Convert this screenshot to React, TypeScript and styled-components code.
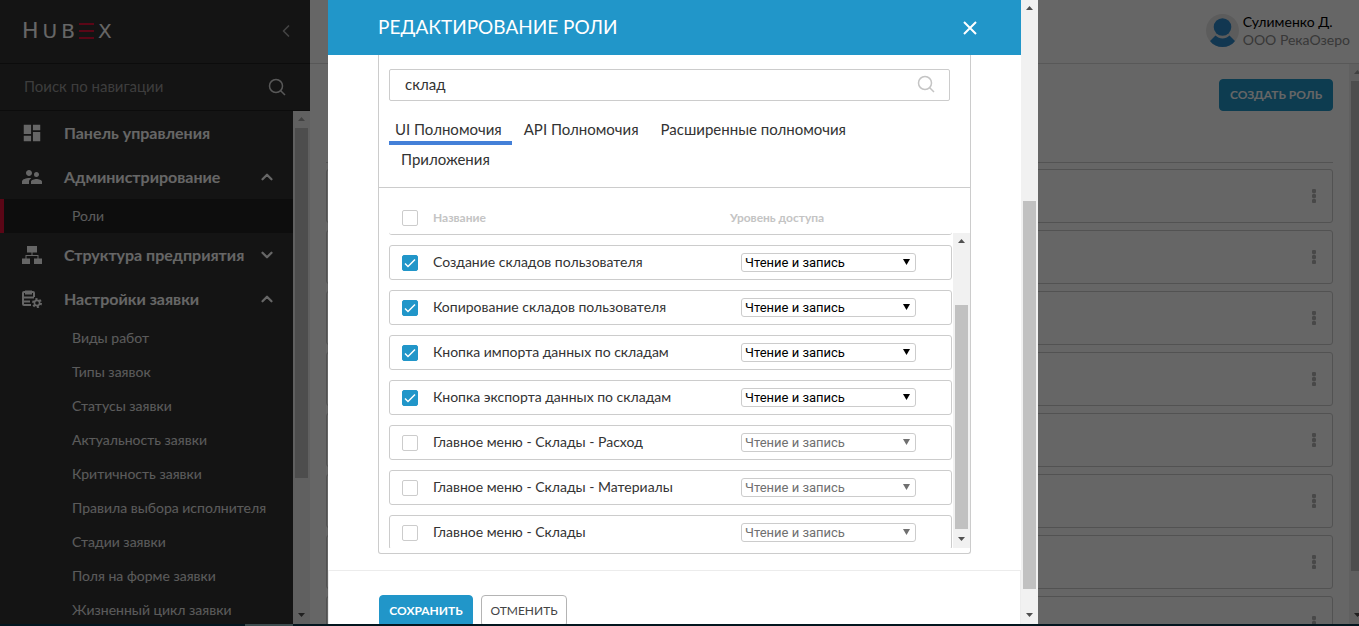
import React, { useState } from 'react';
import styled, { createGlobalStyle, css } from 'styled-components';
import { ChevronDown, ChevronLeft, ChevronUp } from 'lucide-react';
import { MdDashboard, MdSupervisorAccount } from 'react-icons/md';

const blue = '#2196c9';
const line = '#cccccc';

const GlobalStyle = createGlobalStyle`
  * { box-sizing: border-box; }
  body { margin: 0; font-family: Lato, "Open Sans", sans-serif; font-size: 15px; color: #333; }
  button, input, select { font-family: inherit; margin: 0; }
  button { cursor: pointer; }
  svg { flex: none; }
  ul { list-style: none; margin: 0; padding: 0; }
`;

/* ---------- shell ---------- */

const Shell = styled.div`
  display: flex;
  flex-direction: column;
  height: 100vh;
  overflow: hidden;
`;

const Workspace = styled.div`
  position: relative;
  display: flex;
  flex: 1;
  min-height: 0;
  width: calc(100% + 7px);
  background: #fff;
  overflow: hidden;
`;

const TaskStrip = styled.div`
  display: flex;
  height: 2px;
  padding-left: 245px;
  background: #03161f;
`;

const TaskActive = styled.div`
  width: 48px;
  background: #3b4b4e;
`;

/* ---------- scrollbar ---------- */

const Bar = styled.div`
  display: flex;
  flex-direction: column;
  flex: none;
  width: 17px;
  background: #f1f1f1;
`;

const BarArrow = styled.svg`
  display: block;
  flex: none;
  width: 17px;
  height: 17px;
`;

const BarSpace = styled.div<{ $part: number }>`
  flex: ${p => p.$part} 1 0;
`;

const BarThumb = styled(BarSpace)`
  margin: 0 2px;
  background: #c1c1c1;
`;

function Scrollbar({ before, thumb, after, dimUp }: { before: number; thumb: number; after: number; dimUp?: boolean }) {
  return (
    <Bar aria-hidden="true">
      <BarArrow viewBox="0 0 17 17"><path d="M5 10h7L8.500 6z" fill={dimUp ? '#a3a3a3' : '#505050'} /></BarArrow>
      <BarSpace $part={before} />
      <BarThumb $part={thumb} />
      <BarSpace $part={after} />
      <BarArrow viewBox="0 0 17 17"><path d="M5 6h7L8.500 10z" fill="#505050" /></BarArrow>
    </Bar>
  );
}

/* ---------- sidebar ---------- */

const Sidebar = styled.aside`
  display: flex;
  flex-direction: column;
  flex: none;
  width: 310px;
  background: #323232;
  color: #fff;
`;

const SideHead = styled.div`
  display: flex;
  align-items: center;
  justify-content: space-between;
  flex: none;
  height: 64px;
  padding: 0 14px 2px 22px;
  border-bottom: 1px solid #1e1e1e;
`;

const Logo = styled.div`
  display: flex;
  align-items: baseline;
  gap: 4px;
  font-family: "DejaVu Sans", sans-serif;
  font-size: 20px;
  line-height: 24px;
`;

const LogoCap = styled.span`
  font-size: 22px;
`;

const LogoBars = styled.span`
  display: flex;
  flex-direction: column;
  align-self: center;
  justify-content: space-between;
  width: 15px;
  height: 16px;

  i { height: 2px; background: #e01138; }
`;

const IconButton = styled.button<{ $color: string }>`
  display: flex;
  padding: 0;
  border: 0;
  background: none;
  color: ${p => p.$color};
`;

const SideSearch = styled.label`
  display: flex;
  align-items: center;
  justify-content: space-between;
  flex: none;
  height: 47px;
  padding: 0 24px;
  border-bottom: 1px solid #1e1e1e;
  color: #ddd;

  input {
    flex: 1;
    min-width: 0;
    padding: 0 0 2px;
    border: 0;
    outline: 0;
    background: none;
    color: #fff;
    font-size: 15px;
  }
  input::placeholder { color: #999; opacity: 1; }
`;

const SideBody = styled.div`
  display: flex;
  flex: 1;
  min-height: 0;
`;

const Nav = styled.nav`
  flex: 1;
  min-width: 0;
  overflow: hidden;
`;

const NavGroup = styled.button`
  display: flex;
  align-items: center;
  gap: 20px;
  width: 100%;
  height: 44px;
  padding: 0 17px 0 20px;
  border: 0;
  background: none;
  color: #fff;
  font-size: 16px;
  font-weight: 700;
  text-align: left;
`;

const NavIcon = styled.span`
  display: flex;
  justify-content: center;
  flex: none;
  width: 24px;
`;

const NavText = styled.span`
  flex: 1;
  min-width: 0;
  padding-bottom: 2px;
  white-space: nowrap;
`;

const NavLink = styled.a<{ $active?: boolean }>`
  display: block;
  padding-left: 72px;
  color: #e4e4e4;
  font-size: 14px;
  line-height: 34px;
  text-decoration: none;
  white-space: nowrap;
  ${p => p.$active && css`
    padding-left: 68px;
    border-left: 4px solid #e01138;
    background: #212121;
  `}
`;

/* ---------- page behind the dialog ---------- */

const Main = styled.main`
  display: flex;
  flex-direction: column;
  flex: 1;
  min-width: 0;
`;

const TopBar = styled.header`
  display: flex;
  align-items: center;
  justify-content: flex-end;
  flex: none;
  height: 64px;
  padding: 0 16px 2px;
  border-bottom: 1px solid #dcdcdc;
`;

const User = styled.div`
  display: flex;
  align-items: center;
  gap: 4px;
  font-size: 14px;
  line-height: 18px;
`;

const UserName = styled.div`color: #000;`;
const UserOrg = styled.div`color: #8c8c8c;`;

const PageBody = styled.div`
  display: flex;
  flex: 1;
  min-height: 0;
`;

const PageContent = styled.div`
  flex: 1;
  min-width: 0;
  padding: 15px 16px 0;
  overflow: hidden;
`;

const PageHead = styled.div`
  display: flex;
  justify-content: flex-end;
  height: 84px;
  margin-bottom: 6px;
  border-bottom: 1px solid #d0d0d0;
`;

const RoleCards = styled.ul`
  display: flex;
  flex-direction: column;
  gap: 7px;
`;

const RoleCard = styled.li`
  display: flex;
  align-items: center;
  justify-content: flex-end;
  flex: none;
  height: 54px;
  padding-right: 16px;
  border: 1px solid ${line};
  border-radius: 3px;
`;

/* ---------- dialog ---------- */

const Overlay = styled.div`
  position: absolute;
  inset: 0;
  display: flex;
  justify-content: center;
  background: rgba(0, 0, 0, 0.6);
`;

const Dialog = styled.section`
  display: flex;
  width: 100%;
  max-width: 710px;
  overflow: hidden;
  background: #fff;
`;

const DialogMain = styled.form`
  display: flex;
  flex-direction: column;
  flex: 1;
  min-width: 0;
`;

const DialogHead = styled.header`
  display: flex;
  align-items: center;
  justify-content: space-between;
  flex: none;
  height: 55px;
  padding: 0 42px 0 50px;
  background: ${blue};
  color: #fff;
`;

const DialogTitle = styled.h2`
  margin: 0;
  padding-bottom: 2px;
  font-size: 19px;
  font-weight: 400;
  line-height: 24px;
`;

const Panel = styled.div`
  flex: none;
  margin: 0 50px 16px;
  border: 1px solid ${line};
  border-top: 0;
  border-radius: 0 0 3px 3px;
`;

const PanelTop = styled.div`
  padding: 14px 20px 12px 10px;
  border-bottom: 1px solid ${line};
`;

const SearchField = styled.label`
  display: flex;
  align-items: center;
  height: 32px;
  margin-bottom: 14px;
  padding: 0 14px 2px 15px;
  border: 1px solid ${line};
  border-radius: 2px;
  color: #c4c4c4;

  input {
    flex: 1;
    min-width: 0;
    padding: 0;
    border: 0;
    outline: 0;
    background: none;
    color: #333;
    font-size: 15px;
  }
`;

const Tabs = styled.div`
  display: flex;
  flex-wrap: wrap;
`;

const Tab = styled.button<{ $active?: boolean }>`
  height: 30px;
  padding: 0 10px 2px 12px;
  border: 0;
  background: none;
  color: #333;
  font-size: 15px;
  line-height: 28px;
  ${p => p.$active && css`
    padding-left: 6px;
    box-shadow: inset 0 -4px 0 #4480d8;
  `}
`;

const TableArea = styled.div`
  display: flex;
  align-items: flex-end;
  padding: 0 0 5px 10px;
`;

const ScrollHolder = styled.div`
  display: flex;
  height: 315px;
  margin-left: 1px;
`;

const Table = styled.table`
  display: block;
  flex: 1;
  min-width: 0;
`;

const HeadSection = styled.thead`
  display: block;
`;

const HeadRow = styled.tr`
  display: grid;
  grid-template-columns: 44px 297px 1fr;
  align-items: center;
  height: 47px;
  padding: 14px 0 0;
  border-bottom: 1px solid ${line};
  border-radius: 0 0 3px 3px;
  color: #c4c4c4;
  font-size: 12px;
`;

const HeadCell = styled.th`
  padding: 0 0 1px;
  font-weight: 700;
  text-align: left;

  &:first-child { padding: 0 0 0 13px; }
`;

const Rows = styled.tbody`
  display: flex;
  flex-direction: column;
  gap: 10px;
  height: 313px;
  padding-top: 10px;
  overflow: hidden;
`;

const Row = styled.tr`
  display: grid;
  grid-template-columns: 43px 308px 1fr;
  align-items: center;
  flex: none;
  height: 35px;
  border: 1px solid ${line};
  border-radius: 3px;
`;

const Cell = styled.td<{ $kind: 'check' | 'name' | 'level' }>`
  padding: 0;
  font-size: 14px;
  ${p => p.$kind === 'check' && css`padding-left: 12px;`}
  ${p => p.$kind === 'name' && css`padding-bottom: 2px;`}
`;

const CheckWrap = styled.span`
  display: grid;
  width: 16px;
  height: 16px;

  > * { grid-area: 1 / 1; }
  svg { pointer-events: none; }
`;

const CheckInput = styled.input`
  appearance: none;
  width: 16px;
  height: 16px;
  border: 1px solid ${line};
  border-radius: 2px;
  background: #fff;

  &:checked { border-color: ${blue}; background: ${blue}; }
`;

const SelectWrap = styled.span`
  display: grid;
  align-items: center;
  width: 175px;

  > * { grid-area: 1 / 1; }
  svg { justify-self: end; margin: 0 6px 1px 0; pointer-events: none; }
`;

const Select = styled.select`
  appearance: none;
  width: 100%;
  height: 19px;
  padding: 0 20px 0 3px;
  border: 1px solid ${line};
  border-radius: 3px;
  background: #fff;
  color: #000;
  font-family: Roboto, sans-serif;
  font-size: 13px;
  line-height: 17px;

  &:disabled { color: #707070; opacity: 1; }
`;

const DialogFoot = styled.footer`
  display: flex;
  gap: 8px;
  flex: 1;
  align-items: flex-start;
  padding: 24px 50px;
  border: 1px solid #ececec;
`;

const Button = styled.button<{ $primary?: boolean; $wide?: boolean }>`
  flex: none;
  height: 32px;
  min-width: ${p => (p.$wide ? 114 : p.$primary ? 94 : 86)}px;
  padding: 0 8px 2px;
  border: 1px solid ${p => (p.$primary ? blue : '#b4b4b4')};
  border-radius: 4px;
  background: ${p => (p.$primary ? blue : '#fff')};
  color: ${p => (p.$primary ? '#fff' : '#444')};
  font-size: 12px;
  font-weight: ${p => (p.$primary ? 700 : 400)};
`;

/* ---------- drawings ---------- */

const SearchIcon = () => (
  <svg width="18" height="18" viewBox="0 0 18 18" fill="none" stroke="currentColor" strokeWidth="1.500">
    <circle cx="8" cy="8" r="6.500" />
    <path d="M12.500 12.500 17 17" />
  </svg>
);

const StructureIcon = () => (
  <svg width="20" height="18" viewBox="0 0 20 18" fill="currentColor">
    <path d="M5 0h10v6.500H5zM9.500 6.500h1V9h6v3.500h-1V10h-11v2.500h-1V9h6zM0 12.500h8V18H0zM12 12.500h8V18h-8z" />
  </svg>
);

const RequestIcon = () => (
  <svg width="20" height="18" viewBox="0 0 20 18" fill="none" stroke="currentColor">
    <path d="M9 15H2c-.6 0-1-.4-1-1V3c0-.6.400-1 1-1h9c.6 0 1 .4 1 1v4" strokeWidth="2" />
    <path d="M4 1.500h5v2H4z" strokeWidth="2" />
    <path d="M2 7.500h10M2 11.500h6" strokeWidth="2" />
    <circle cx="15" cy="13" r="2.600" strokeWidth="1.600" />
    <circle cx="15" cy="13" r="4" strokeWidth="2" strokeDasharray="2.090 2.090" />
  </svg>
);

const Avatar = () => (
  <svg width="33" height="33" viewBox="0 0 33 33">
    <circle cx="16.500" cy="16.500" r="16.500" fill="#e6e6e6" />
    <circle cx="16.500" cy="13" r="8.800" fill="#2f8acb" />
    <path d="M4 27l5.500-5.500c4 4 10 4 14 0L29 27c-3 4-7.500 6-12.500 6S7 31 4 27z" fill="#2f8acb" />
  </svg>
);

const Dots = () => (
  <svg width="4" height="14" viewBox="0 0 4 14" fill="#b4b4b4">
    <circle cx="2" cy="2" r="2.200" /><circle cx="2" cy="7" r="2.200" /><circle cx="2" cy="12" r="2.200" />
  </svg>
);

const CloseIcon = () => (
  <svg width="18" height="18" viewBox="0 0 18 18" stroke="currentColor" strokeWidth="2">
    <path d="M3 3l12 12M15 3 3 15" />
  </svg>
);

const Tick = () => (
  <svg width="16" height="16" viewBox="0 0 16 16" fill="none" stroke="#fff" strokeWidth="1.500">
    <path d="M3 8.500l3 3 7-7" />
  </svg>
);

/* ---------- data ---------- */

const settings = [
  'Виды работ', 'Типы заявок', 'Статусы заявки', 'Актуальность заявки', 'Критичность заявки',
  'Правила выбора исполнителя', 'Стадии заявки', 'Поля на форме заявки', 'Жизненный цикл заявки',
];

const tabs = ['UI Полномочия', 'API Полномочия', 'Расширенные полномочия', 'Приложения'];

const initialRights = [
  { name: 'Создание складов пользователя', on: true },
  { name: 'Копирование складов пользователя', on: true },
  { name: 'Кнопка импорта данных по складам', on: true },
  { name: 'Кнопка экспорта данных по складам', on: true },
  { name: 'Главное меню - Склады - Расход', on: false },
  { name: 'Главное меню - Склады - Материалы', on: false },
  { name: 'Главное меню - Склады', on: false },
];

function Checkbox({ label, checked, onChange }: { label: string; checked: boolean; onChange: (v: boolean) => void }) {
  return (
    <CheckWrap>
      <CheckInput type="checkbox" aria-label={label} checked={checked} onChange={e => onChange(e.target.checked)} />
      {checked && <Tick />}
    </CheckWrap>
  );
}

function Group({ icon, text, chevron }: { icon: React.ReactNode; text: string; chevron?: 'up' | 'down' }) {
  return (
    <NavGroup type="button">
      <NavIcon>{icon}</NavIcon>
      <NavText>{text}</NavText>
      {chevron === 'up' && <ChevronUp size={18} strokeWidth={3} />}
      {chevron === 'down' && <ChevronDown size={18} strokeWidth={3} />}
    </NavGroup>
  );
}

export default function App() {
  const [rights, setRights] = useState(initialRights);
  const [tab, setTab] = useState(0);
  const [query, setQuery] = useState('склад');

  const toggle = (index: number, on: boolean) =>
    setRights(rights.map((r, i) => (i === index ? { ...r, on } : r)));

  return (
    <Shell>
      <GlobalStyle />
      <Workspace>
        <Sidebar>
          <SideHead>
            <Logo aria-label="HubEx">
              <LogoCap>H</LogoCap><span>U</span><span>B</span>
              <LogoBars><i /><i /><i /></LogoBars>
              <span>X</span>
            </Logo>
            <IconButton type="button" $color="#a8a8a8" aria-label="Свернуть меню"><ChevronLeft size={20} /></IconButton>
          </SideHead>
          <SideSearch>
            <input type="text" placeholder="Поиск по навигации" aria-label="Поиск по навигации" />
            <SearchIcon />
          </SideSearch>
          <SideBody>
            <Nav>
              <Group icon={<MdDashboard size={22} />} text="Панель управления" />
              <Group icon={<MdSupervisorAccount size={24} />} text="Администрирование" chevron="up" />
              <NavLink href="#roles" $active>Роли</NavLink>
              <Group icon={<StructureIcon />} text="Структура предприятия" chevron="down" />
              <Group icon={<RequestIcon />} text="Настройки заявки" chevron="up" />
              {settings.map(s => <NavLink key={s} href="#settings">{s}</NavLink>)}
            </Nav>
            <Scrollbar before={0} thumb={350} after={129} dimUp />
          </SideBody>
        </Sidebar>

        <Main>
          <TopBar>
            <User>
              <Avatar />
              <div>
                <UserName>Сулименко Д.</UserName>
                <UserOrg>ООО РекаОзеро</UserOrg>
              </div>
            </User>
          </TopBar>
          <PageBody>
            <PageContent>
              <PageHead><Button type="button" $primary $wide>СОЗДАТЬ РОЛЬ</Button></PageHead>
              <RoleCards>
                {Array.from({ length: 8 }, (_, i) => <RoleCard key={i}><Dots /></RoleCard>)}
              </RoleCards>
            </PageContent>
            <Scrollbar before={0} thumb={490} after={36} dimUp />
          </PageBody>
        </Main>

        <Overlay>
          <Dialog role="dialog" aria-labelledby="dialog-title">
            <DialogMain onSubmit={e => e.preventDefault()}>
              <DialogHead>
                <DialogTitle id="dialog-title">РЕДАКТИРОВАНИЕ РОЛИ</DialogTitle>
                <IconButton type="button" $color="#fff" aria-label="Закрыть"><CloseIcon /></IconButton>
              </DialogHead>
              <Panel>
                <PanelTop>
                  <SearchField>
                    <input type="text" aria-label="Поиск" value={query} onChange={e => setQuery(e.target.value)} />
                    <SearchIcon />
                  </SearchField>
                  <Tabs role="tablist">
                    {tabs.map((t, i) => (
                      <Tab key={t} type="button" role="tab" aria-selected={i === tab} $active={i === tab} onClick={() => setTab(i)}>{t}</Tab>
                    ))}
                  </Tabs>
                </PanelTop>
                <TableArea>
                  <Table>
                    <HeadSection>
                      <HeadRow>
                        <HeadCell>
                          <Checkbox
                            label="Выбрать все"
                            checked={rights.every(r => r.on)}
                            onChange={on => setRights(rights.map(r => ({ ...r, on })))}
                          />
                        </HeadCell>
                        <HeadCell>Название</HeadCell>
                        <HeadCell>Уровень доступа</HeadCell>
                      </HeadRow>
                    </HeadSection>
                    <Rows>
                      {rights.map((r, i) => (
                        <Row key={r.name}>
                          <Cell $kind="check"><Checkbox label={r.name} checked={r.on} onChange={on => toggle(i, on)} /></Cell>
                          <Cell $kind="name">{r.name}</Cell>
                          <Cell $kind="level">
                            <SelectWrap>
                              <Select disabled={!r.on} aria-label={`Уровень доступа: ${r.name}`}>
                                <option>Чтение и запись</option>
                              </Select>
                              <svg width="7" height="6" viewBox="0 0 7 6"><path d="M0 0h7L3.500 6z" fill={r.on ? '#000' : '#707070'} /></svg>
                            </SelectWrap>
                          </Cell>
                        </Row>
                      ))}
                    </Rows>
                  </Table>
                  <ScrollHolder><Scrollbar before={55} thumb={224} after={2} /></ScrollHolder>
                </TableArea>
              </Panel>
              <DialogFoot>
                <Button type="submit" $primary>СОХРАНИТЬ</Button>
                <Button type="button">ОТМЕНИТЬ</Button>
              </DialogFoot>
            </DialogMain>
            <Scrollbar before={184} thumb={388} after={18} />
          </Dialog>
        </Overlay>
      </Workspace>
      <TaskStrip><TaskActive /></TaskStrip>
    </Shell>
  );
}
